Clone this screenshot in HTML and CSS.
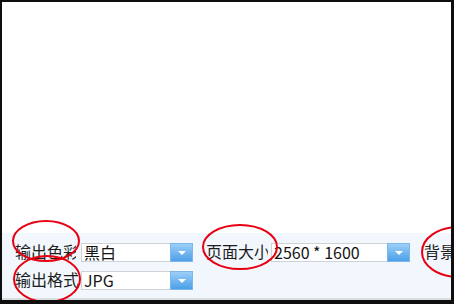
FILE: index.html
```html
<!DOCTYPE html>
<html lang="zh">
<head>
<meta charset="utf-8">
<link rel="stylesheet" href="styles.css">
</head>
<body>
<div class="frame">
  <div class="canvas"></div>
  <div class="panel">
    <div class="row">
      <span class="lbl w61">输出色彩</span>
      <div class="sel w112"><span class="val">黑白</span><span class="btn"><i class="arrow"></i></span></div>
      <span class="lbl w62 ml13">页面大小</span>
      <div class="sel w139"><span class="val">2560 * 1600</span><span class="btn"><i class="arrow"></i></span></div>
      <span class="lbl ml14">背景颜色</span>
    </div>
    <div class="row">
      <span class="lbl w64 mr2">输出格式</span>
      <div class="sel w112"><span class="val">JPG</span><span class="btn"><i class="arrow"></i></span></div>
    </div>
  </div>
  <svg class="marks" width="449" height="298" viewBox="0 0 449 298">
    <ellipse cx="44" cy="239" rx="33" ry="20"/>
    <ellipse cx="45" cy="277" rx="33" ry="23"/>
    <ellipse cx="238" cy="245" rx="37" ry="22"/>
    <ellipse cx="456" cy="250" rx="36" ry="25"/>
  </svg>
</div>
</body>
</html>
```
FILE: styles.css
```css
html, body {
  margin: 0;
  padding: 0;
}
body {
  background: #0e0e0e;
  width: 454px;
  height: 304px;
  box-sizing: border-box;
  padding: 2px 3px 4px 2px;
  overflow: hidden;
  font-family: "Noto Sans CJK SC", "Noto Sans", sans-serif;
  color: #1e1e1e;
}
.frame {
  position: relative;
  height: 298px;
  overflow: hidden;
  display: flex;
  flex-direction: column;
  background: #ffffff;
}
.canvas {
  height: 231px;
  background: #ffffff;
}
.panel {
  flex: 1;
  background: #f1f7fd;
  border-bottom: 2px solid #d9dcdf;
  padding: 10px 0 0 13px;
  display: flex;
  flex-direction: column;
  gap: 9px;
}
.row {
  display: flex;
  align-items: flex-start;
  height: 19px;
  white-space: nowrap;
}
.lbl {
  flex: none;
  font-size: 16px;
  line-height: 16px;
  height: 17px;
  overflow: hidden;
  white-space: nowrap;
}
.w61 { width: 61px; margin-right: 5px; }
.w62 { width: 62px; margin-right: 3px; }
.w64 { width: 64px; }
.mr2 { margin-right: 2px; }
.ml13 { margin-left: 13px; }
.ml14 { margin-left: 14px; }
.sel {
  flex: none;
  height: 19px;
  box-sizing: border-box;
  border: 1px solid #cfd3d6;
  background: #ffffff;
  display: flex;
  align-items: center;
}
.w112 { width: 112px; }
.w139 { width: 139px; }
.val {
  flex: 1;
  padding-left: 2px;
  font-size: 16px;
  line-height: 17px;
  color: #141414;
}
.btn {
  width: 23px;
  height: 19px;
  margin: -1px -1px -1px 0;
  box-sizing: border-box;
  background: linear-gradient(#9bcff8, #4c9fe8);
  border: 1px solid #7cb6ea;
  display: flex;
  align-items: center;
  justify-content: center;
}
.arrow {
  width: 0;
  height: 0;
  border-left: 4px solid transparent;
  border-right: 4px solid transparent;
  border-top: 4px solid #ffffff;
}
.marks {
  position: absolute;
  left: 0;
  top: 0;
  pointer-events: none;
}
.marks ellipse {
  fill: none;
  stroke: #e60012;
  stroke-width: 2;
}
```
